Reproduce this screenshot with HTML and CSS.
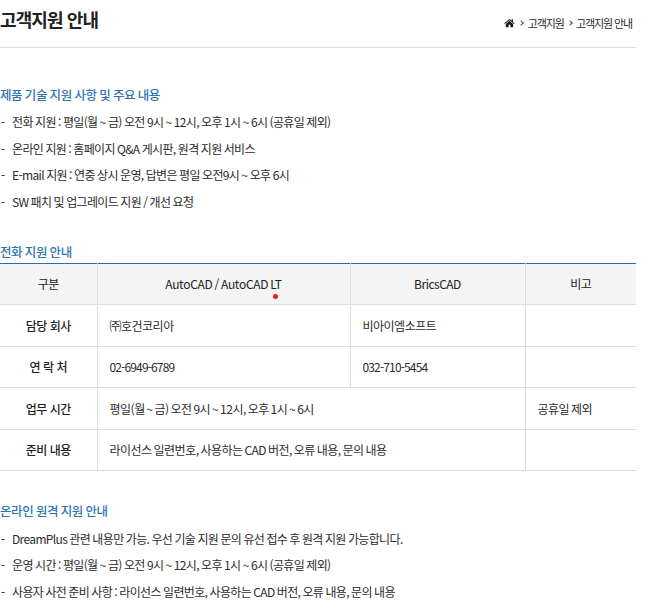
FILE: index.html
```html
<!DOCTYPE html>
<html lang="ko">
<head>
<meta charset="utf-8">
<title>고객지원 안내</title>
<link rel="stylesheet" href="styles.css">
</head>
<body>
<div class="page">
  <header class="head">
    <h1 class="title">고객지원 안내</h1>
    <nav class="crumbs">
      <svg class="home" viewBox="0 0 12 10" width="11" height="10"><path d="M6 0.6 L0.3 5.4 L1 6.2 L6 2 L11 6.2 L11.7 5.4 L9.8 3.8 V1 H8.4 V2.6 Z M6 2.9 L2 6.2 V9.6 H5 V7 H7 V9.6 H10 V6.2 Z" fill="#1a1a1a"/></svg>
      <span class="sep"></span><span>고객지원</span><span class="sep"></span><span>고객지원 안내</span>
    </nav>
  </header>

  <h2 class="sub first">제품 기술 지원 사항 및 주요 내용</h2>
  <ul class="list">
    <li>전화 지원 : 평일(월 ~ 금) 오전 9시 ~ 12시, 오후 1시 ~ 6시 (공휴일 제외)</li>
    <li>온라인 지원 : 홈페이지 Q&amp;A 게시판, 원격 지원 서비스</li>
    <li>E-mail 지원 : 연중 상시 운영, 답변은 평일 오전9시 ~ 오후 6시</li>
    <li>SW 패치 및 업그레이드 지원 / 개선 요청</li>
  </ul>

  <h2 class="sub second">전화 지원 안내</h2>
  <table class="tbl">
    <colgroup><col class="c1"><col class="c2"><col class="c3"><col class="c4"></colgroup>
    <thead>
      <tr><th>구분</th><th><span class="mark">AutoCAD / AutoCAD LT<i class="dot"></i></span></th><th>BricsCAD</th><th>비고</th></tr>
    </thead>
    <tbody>
      <tr><th>담당 회사</th><td>㈜호건코리아</td><td>비아이엠소프트</td><td></td></tr>
      <tr><th>연 락 처</th><td><span class="num">02-6949-6789</span></td><td><span class="num">032-710-5454</span></td><td></td></tr>
      <tr><th>업무 시간</th><td colspan="2">평일(월 ~ 금) 오전 9시 ~ 12시, 오후 1시 ~ 6시</td><td>공휴일 제외</td></tr>
      <tr><th>준비 내용</th><td colspan="2">라이선스 일련번호, 사용하는 CAD 버전, 오류 내용, 문의 내용</td><td></td></tr>
    </tbody>
  </table>

  <h2 class="sub third">온라인 원격 지원 안내</h2>
  <ul class="list low">
    <li>DreamPlus 관련 내용만 가능. 우선 기술 지원 문의 유선 접수 후 원격 지원 가능합니다.</li>
    <li>운영 시간 : 평일(월 ~ 금) 오전 9시 ~ 12시, 오후 1시 ~ 6시 (공휴일 제외)</li>
    <li>사용자 사전 준비 사항 : 라이선스 일련번호, 사용하는 CAD 버전, 오류 내용, 문의 내용</li>
  </ul>
</div>
</body>
</html>
```

FILE: styles.css
```css
* { box-sizing: border-box; }
html, body { margin: 0; padding: 0; background: #fff; }
body {
  font-family: "Noto Sans CJK KR", "Noto Sans", sans-serif;
  font-size: 12px;
  color: #2b2b2b;
  overflow: hidden;
}
.page { width: 636px; height: 613px; overflow: hidden; }
.head {
  height: 48px;
  border-bottom: 1px solid #ddd;
  display: flex;
  justify-content: space-between;
  padding-right: 4px;
}
.title {
  margin: 0;
  font-size: 18px;
  line-height: 39px;
  font-weight: 700;
  letter-spacing: -0.9px;
  color: #222;
}
.crumbs {
  display: flex;
  align-items: center;
  height: 45px;
  font-size: 11px;
  letter-spacing: -1.1px;
  color: #2b2b2b;
}
.home { margin-right: 3px; }
.sep {
  width: 4px;
  height: 4px;
  border-top: 1px solid #555;
  border-right: 1px solid #555;
  transform: rotate(45deg);
  margin: 0 5px 0 1px;
}
.crumbs span:not(.sep) + .sep { margin: 0 4px 0 4px; }
.sub {
  margin: 0;
  font-size: 12.5px;
  line-height: 18px;
  font-weight: 500;
  letter-spacing: -0.4px;
  word-spacing: -0.5px;
  color: #2f75b5;
}
.first { margin-top: 38px; }
.second { margin-top: 27px; }
.third { margin-top: 31px; }
.list { margin: 5px 0 0; padding: 0; list-style: none; }
.low { margin-top: 6px; }
.list li {
  position: relative;
  padding-left: 12px;
  font-size: 12px;
  line-height: 26.67px;
  letter-spacing: -0.65px;
  word-spacing: -0.5px;
  color: #2b2b2b;
}
.list li::before {
  content: "-";
  position: absolute;
  left: 1px;
}
.tbl {
  width: 636px;
  margin-top: 2px;
  border-collapse: collapse;
  table-layout: fixed;
  border-top: 1px solid #2a6db0;
  font-size: 12px;
  letter-spacing: -0.5px;
}
.c1 { width: 97px; }
.c2 { width: 253px; }
.c3 { width: 175px; }
.c4 { width: 111px; }
.tbl th, .tbl td {
  border: 1px solid #ddd;
  text-align: center;
  padding: 0;
  font-weight: 500;
  color: #2b2b2b;
}
.tbl tr { height: 42px; }
.tbl thead tr { height: 41px; }
.tbl tbody tr:nth-child(even) { height: 41px; }
.tbl tr > :first-child { border-left: 0; }
.tbl tr > :last-child { border-right: 0; }
.tbl thead th { background: #f4f4f4; border-top: 0; font-weight: 400; color: #222; padding-bottom: 1px; }
.tbl thead .mark { letter-spacing: -0.3px; word-spacing: -1px; }
.tbl tbody th { font-weight: 500; color: #222; }
.tbl td { text-align: left; padding-left: 12px; font-weight: 400; word-spacing: -1px; }
.num { letter-spacing: -0.85px; }
.mark { position: relative; display: inline-block; }
.dot {
  position: absolute;
  right: 4px;
  bottom: -7px;
  width: 5px;
  height: 5px;
  border-radius: 50%;
  background: #e8202a;
}
```
